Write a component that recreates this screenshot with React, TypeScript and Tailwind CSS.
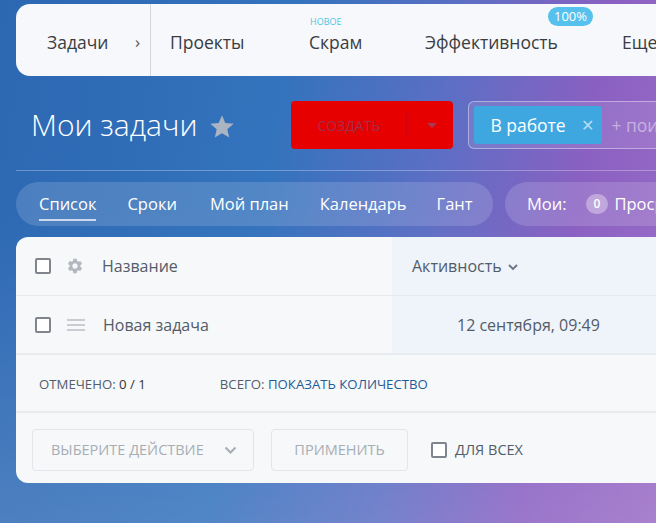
import { MdSettings, MdStar } from "react-icons/md";

function Checkbox() {
  return <div className="flex-none w-4 h-4 rounded-[2px] border-2 border-[#80858d] bg-white" />;
}

export default function App() {
  return (
    <div
      className="w-[656px] h-[523px] overflow-hidden relative whitespace-nowrap bg-[linear-gradient(100deg,#2c67b2_0%,#3473bd_40%,#5c6fc4_62%,#8a60c2_82%,#9a6cc6_100%)]"
      style={{ fontFamily: '"Open Sans", "Noto Sans", sans-serif' }}
    >
      <div className="absolute inset-0 bg-[linear-gradient(180deg,rgba(255,255,255,0)_40%,rgba(255,255,255,0.14)_100%)]" />
      <div className="relative flex flex-col items-start pl-4 pt-1">
        {/* top nav */}
        <div className="flex-none w-[720px] h-[72px] rounded-l-[14px] bg-[#f6f8fb] flex items-center text-[17.5px] text-[#3a3d42]">
          <div className="flex-none flex items-center h-full pl-[31px] pr-[10px] w-[134px] pt-[4px]">
            <span>Задачи</span>
            <span className="ml-auto text-[17px] text-[#555]">›</span>
          </div>
          <div className="flex-none w-px h-full bg-[#d3d6da]" />
          <div className="flex-none w-[158px] pl-[19px] pt-[4px]">Проекты</div>
          <div className="flex-none w-[116px] relative pt-[4px]">
            <span className="absolute -top-[10px] left-[1px] text-[9px] text-[#4fc6df]">НОВОЕ</span>
            Скрам
          </div>
          <div className="flex-none w-[197px] relative pt-[4px]">
            <span className="absolute -top-[18px] left-[123px] h-[19px] px-[6px] rounded-full bg-[#56c1ec] text-white text-[13px] leading-[19px]">
              100%
            </span>
            Эффективность
          </div>
          <div className="flex-none pt-[4px]">Еще</div>
        </div>

        {/* title row */}
        <div className="flex-none flex items-center mt-[25px] h-[48px]">
          <div className="flex-none pl-[15px] text-[30px] font-light text-white leading-none">Мои задачи</div>
          <MdStar className="flex-none ml-[11px] mt-[4px] text-[#aab4c2]" size={28} />
          <div className="flex-none ml-[55px] w-[162px] h-[48px] rounded-[4px] bg-[#e60000] flex items-center">
            <span className="pl-[26px] text-[14px] text-[#a02f4c] w-[115px]">СОЗДАТЬ</span>
            <div className="w-px h-[26px] bg-[#d00010]" />
            <span className="ml-[20px] w-0 h-0 border-l-[5px] border-r-[5px] border-t-[5px] border-l-transparent border-r-transparent border-t-[#a63a55]" />
          </div>
          <div className="flex-none ml-[15px] w-[240px] h-[48px] rounded-[6px] border border-white/40 bg-white/10 flex items-center pl-[5px]">
            <div className="flex-none w-[128px] h-[38px] rounded-[3px] bg-[#3ea7e0] flex items-center pl-[16px] text-[17.5px] text-white">
              В работе
              <span className="ml-auto mr-[8px] text-[16px] text-[#b6dcf2]">✕</span>
            </div>
            <span className="ml-[9px] text-[17.5px] text-white/45">+ поиск</span>
          </div>
        </div>

        <div className="flex-none mt-[21px] w-[700px] h-px bg-white/30" />

        {/* view tabs */}
        <div className="flex-none mt-[11px] flex items-center gap-3">
          <div className="flex-none w-[477px] h-[44px] rounded-full bg-white/15 flex items-center pl-[23px] text-[16.5px] text-white">
            <span className="relative">
              Список
              <span className="absolute left-0 right-0 -bottom-[5px] h-[2px] bg-white/70" />
            </span>
            <span className="ml-[31px]">Сроки</span>
            <span className="ml-[33px]">Мой план</span>
            <span className="ml-[31px]">Календарь</span>
            <span className="ml-[30px]">Гант</span>
          </div>
          <div className="flex-none w-[220px] h-[44px] rounded-full bg-white/15 flex items-center pl-[22px] text-[16.5px] text-white">
            <span>Мои:</span>
            <span className="ml-[19px] h-[20px] px-[8px] rounded-full bg-white/35 text-[12px] font-semibold leading-[20px]">0</span>
            <span className="ml-[6px]">Просрочены</span>
          </div>
        </div>

        {/* table card */}
        <div className="flex-none mt-[11px] w-[700px] h-[246px] rounded-l-[12px] bg-[#f6f8fa] overflow-hidden flex flex-col">
          <div className="flex-none flex h-[59px] border-b border-[#e5e8ec]">
            <div className="flex-none w-[376px] flex items-center pl-[19px]">
              <Checkbox />
              <MdSettings className="flex-none ml-[15px] text-[#b3b8bf]" size={18} />
              <span className="ml-[18px] text-[16px] text-[#535c69]">Название</span>
            </div>
            <div className="flex-1 bg-[#eef4f9] flex items-center pl-[20px] text-[16px] text-[#535c69]">
              Активность
              <svg className="ml-[6px] mt-[2px]" width="10" height="7" viewBox="0 0 10 7">
                <path d="M1 1l4 4 4-4" stroke="#6b7380" strokeWidth="1.8" fill="none" />
              </svg>
            </div>
          </div>
          <div className="flex-none flex h-[59px] border-b-2 border-[#e9ecef]">
            <div className="flex-none w-[376px] flex items-center pl-[19px]">
              <Checkbox />
              <div className="flex-none ml-[16px] flex flex-col gap-[3px]">
                <div className="w-[18px] h-[2px] bg-[#c9cdd3]" />
                <div className="w-[18px] h-[2px] bg-[#c9cdd3]" />
                <div className="w-[18px] h-[2px] bg-[#c9cdd3]" />
              </div>
              <span className="ml-[18px] text-[16px] text-[#535c69]">Новая задача</span>
            </div>
            <div className="flex-1 bg-[#eef4f9] flex items-center pl-[65px] text-[16px] text-[#535c69]">
              12 сентября, 09:49
            </div>
          </div>
          <div className="flex-none flex items-center h-[58px] border-b-2 border-[#e9ecef] pl-[23px] pt-[3px] text-[13.2px] text-[#535c69]">
            <span>
              ОТМЕЧЕНО: <span className="text-[#333]">0 / 1</span>
            </span>
            <span className="ml-[74px]">
              ВСЕГО: <span className="text-[#1e5c98]">ПОКАЗАТЬ КОЛИЧЕСТВО</span>
            </span>
          </div>
          <div className="flex items-center flex-1 pl-[16px] pt-[3px]">
            <div className="flex-none w-[222px] h-[42px] rounded-[4px] border border-[#e2e5e9] flex items-center pl-[18px] text-[14.5px] text-[#a8adb4]">
              ВЫБЕРИТЕ ДЕЙСТВИЕ
              <svg className="ml-[20px]" width="13" height="8" viewBox="0 0 13 8">
                <path d="M1.5 1.5l5 5 5-5" stroke="#a8adb4" strokeWidth="2" fill="none" />
              </svg>
            </div>
            <div className="flex-none ml-[17px] w-[137px] h-[42px] rounded-[4px] border border-[#e2e5e9] flex items-center justify-center text-[14.5px] text-[#a8adb4]">
              ПРИМЕНИТЬ
            </div>
            <div className="flex-none ml-[23px]">
              <Checkbox />
            </div>
            <span className="ml-[8px] text-[14.5px] text-[#535c69]">ДЛЯ ВСЕХ</span>
          </div>
        </div>
      </div>
    </div>
  );
}
